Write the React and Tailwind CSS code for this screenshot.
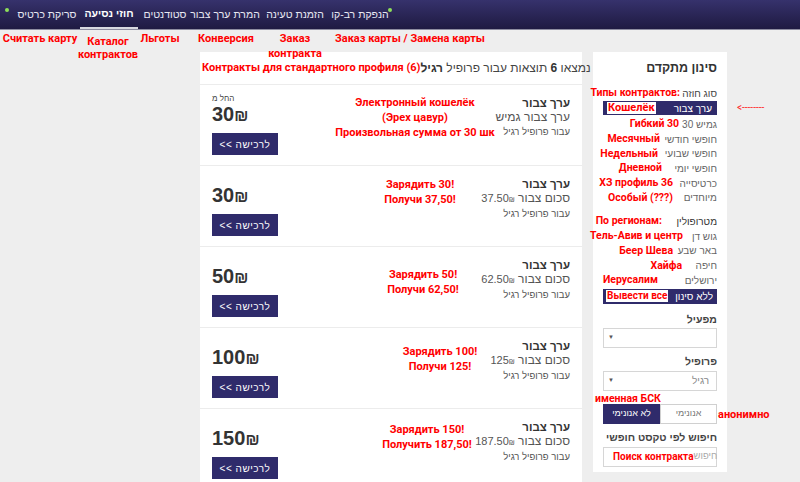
import React from 'react'

const red = "font-['Roboto',sans-serif] font-bold text-[#ff0000] whitespace-nowrap"

const navItems = [
  { label: 'סריקת כרטיס', w: 'w-[66px]' },
  { label: 'חוזי נסיעה', w: 'w-[58px]', active: true },
  { label: 'סטודנטים', w: 'w-[54px]' },
  { label: 'המרת ערך צבור', w: 'w-[66px]' },
  { label: 'הזמנת טעינה', w: 'w-[74px]' },
  { label: 'הנפקת רב-קו', w: 'w-[56px]' },
]

const items = [
  {
    price: '30',
    from: true,
    sub: 'ערך צבור גמיש',
    note: ['Электронный кошелёк', '(Эрех цавур)', 'Произвольная сумма от 30 шк'],
    noteCls: 'ml-[35px] mt-[11px]',
  },
  { price: '30', amount: '37.50', note: ['Зарядить 30!', 'Получи 37,50!'], noteCls: 'ml-[40px] mt-[12px]' },
  { price: '50', amount: '62.50', note: ['Зарядить 50!', 'Получи 62,50!'], noteCls: 'ml-[43px] mt-[21px]' },
  { price: '100', amount: '125', note: ['Зарядить 100!', 'Получи 125!'], noteCls: 'ml-[60px] mt-[17px]' },
  { price: '150', amount: '187.50', note: ['Зарядить 150!', 'Получить 187,50!'], noteCls: 'ml-[47px] mt-[14px]' },
]

const types = [
  { he: 'גמיש 30', ru: 'Гибкий 30', w: 'w-[76px]' },
  { he: 'חופשי חודשי', ru: 'Месячный', w: 'w-[57px]' },
  { he: 'חופשי שבועי', ru: 'Недельный', w: 'w-[55px]' },
  { he: 'חופשי יומי', ru: 'Дневной', w: 'w-[59px]' },
  { he: 'כרטיסייה', ru: 'ХЗ профиль 36', w: 'w-[70px]' },
  { he: 'מיוחדים', ru: 'Особый (???)', w: 'w-[70px]' },
]

const regions = [
  { he: 'גוש דן', ru: 'Тель-Авив и центр', w: 'w-[80px]' },
  { he: 'באר שבע', ru: 'Беер Шева', w: 'w-[70px]' },
  { he: 'חיפה', ru: 'Хайфа', w: 'w-[79px]' },
  { he: 'ירושלים', ru: 'Иерусалим', w: 'w-[55px]' },
]

function Row({ he, ru, w, dark }) {
  return (
    <div className="flex items-center h-[14.7px]">
      <div className={`${w} shrink-0 flex justify-end text-[10.5px] leading-[14px] ${red}`}>{ru}</div>
      <div
        dir="rtl"
        className={`flex-1 min-w-0 whitespace-nowrap text-[10px] ${dark ? 'text-[#333]' : 'text-[#666]'}`}
      >
        {he}
      </div>
    </div>
  )
}

function Item({ it }) {
  return (
    <div className="grid grid-cols-[90px_minmax(0,1fr)_100px] h-[81px] border-b border-[#ececec]">
      <div className="pl-3 pt-[9px]">
        <div dir="rtl" className="h-[10px] text-[8px] leading-[10px] text-[#444] text-left">
          {it.from ? 'החל מ' : ''}
        </div>
        <div className="h-[20px] leading-[20px] text-[20px] font-bold text-[#333] flex items-baseline">
          {it.price}
          <span className="text-[16px]">₪</span>
        </div>
        <button
          dir="rtl"
          className="mt-[9px] w-[66px] h-[22px] bg-[#2f2b6b] text-white text-[10px] tracking-[0.5px]"
        >
          לרכישה &gt;&gt;
        </button>
      </div>
      <div className={`${it.noteCls} w-[180px] text-center text-[11px] leading-[14.8px] ${red}`}>
        {it.note.map((n) => (
          <div key={n}>{n}</div>
        ))}
      </div>
      <div dir="rtl" className="pr-3 pt-[11px] whitespace-nowrap text-right">
        <div className="text-[11.5px] leading-[14px] font-bold text-[#333]">ערך צבור</div>
        <div className="text-[12px] leading-[15px] text-[#555]">
          {it.sub ? (
            it.sub
          ) : (
            <>
              סכום צבור{' '}
              <span dir="ltr" className="text-[11px]">
                {it.amount}
                <span className="text-[7px]">₪</span>
              </span>
            </>
          )}
        </div>
        <div className="text-[9.5px] leading-[13px] text-[#555]">עבור פרופיל רגיל</div>
      </div>
    </div>
  )
}

export default function App() {
  return (
    <div className="w-[800px] h-[482px] overflow-hidden bg-[#eeeeee] font-['Liberation_Sans',sans-serif]">
      {/* top nav */}
      <div className="h-[30px] bg-gradient-to-b from-[#36326c] to-[#1f1a42] border-b border-[#8d8ca0] flex items-stretch text-[10.5px] text-[#e8e8f2]">
        <div className="w-[14px] flex justify-center pt-[8px]">
          <div className="w-[4px] h-[4px] rounded-full bg-[#8ee05a]" />
        </div>
        {navItems.map((n) => (
          <div
            key={n.label}
            dir="rtl"
            className={`${n.w} flex items-center justify-center whitespace-nowrap ${
              n.active ? 'font-bold text-white border-b-2 border-[#d8d8e0]' : ''
            }`}
          >
            {n.label}
          </div>
        ))}
        <div className="w-[6px] pt-[8px]">
          <div className="w-[4px] h-[4px] rounded-full bg-[#8ee05a]" />
        </div>
      </div>

      {/* red labels under nav */}
      <div className="relative z-10 h-[22px] flex text-[11px] leading-[15px]">
        <div className={`w-[80px] flex justify-center pt-[1px] ${red}`}>Считать карту</div>
        <div className={`w-[56px] flex flex-col items-center pt-[5px] leading-[13px] ${red}`}>
          <span>Каталог</span>
          <span>контрактов</span>
        </div>
        <div className={`w-[48px] flex justify-center pt-[1px] ${red}`}>Льготы</div>
        <div className={`w-[84px] flex justify-center pt-[1px] ${red}`}>Конверсия</div>
        <div className={`w-[54px] flex flex-col items-center pt-[1px] ${red}`}>
          <span>Заказ</span>
          <span>контракта</span>
        </div>
        <div className={`pl-[13px] pt-[1px] ${red}`}>Заказ карты / Замена карты</div>
      </div>

      <div className="flex items-start pl-[200px] gap-[11px]">
        {/* results */}
        <div className="w-[382px] bg-white">
          <div className="h-[33px] border-b border-[#ececec] flex items-center pl-[2px] pr-3 text-[12px]">
            <span className={`text-[11px] ${red}`}>Контракты для стандартного профиля (6)</span>
            <span dir="rtl" className="ml-auto whitespace-nowrap text-[#444]">
              נמצאו <b className="text-[#333]">6</b> תוצאות עבור פרופיל <b className="text-[#333]">רגיל</b>
            </span>
          </div>
          {items.map((it, i) => (
            <Item key={i} it={it} />
          ))}
        </div>

        {/* filters */}
        <div className="w-[134px] h-[420px] bg-white px-[10px] pt-[8px] flex flex-col">
          <div dir="rtl" className="text-[12.5px] leading-[16px] font-bold text-[#333] whitespace-nowrap">
            סינון מתקדם
          </div>
          <div className="mt-[10px] flex items-center h-[14px]">
            <div className={`w-[77px] shrink-0 flex justify-end text-[10.5px] ${red}`}>Типы контрактов:</div>
            <div dir="rtl" className="flex-1 min-w-0 text-[10px] text-[#444] whitespace-nowrap">
              סוג חוזה
            </div>
          </div>
          <div className="relative mt-[1px] h-[14px] bg-[#2f2b6b] flex items-center pl-[4px] pr-[5px]">
            <span className={`bg-white px-[1px] text-[11px] leading-[12px] ${red}`}>Кошелёк</span>
            <span dir="rtl" className="ml-auto text-[10px] text-white whitespace-nowrap">
              ערך צבור
            </span>
            <span className="absolute left-[134px] top-[-1px] text-[10px] text-[#ff2a2a] font-['Roboto',sans-serif] whitespace-nowrap">
              &lt;--------
            </span>
          </div>
          <div className="mt-[2px]">
            {types.map((t) => (
              <Row key={t.he} {...t} />
            ))}
          </div>
          <div className="mt-[9px]">
            <Row he="מטרופולין" ru="По регионам:" w="w-[59px]" dark />
            {regions.map((t) => (
              <Row key={t.he} {...t} />
            ))}
          </div>
          <div className="mt-[1px] h-[15px] bg-[#2f2b6b] flex items-center pl-[3px] pr-[4px]">
            <span className={`bg-white px-[1px] text-[10px] leading-[12px] ${red}`}>Вывести все</span>
            <span dir="rtl" className="ml-auto text-[10px] text-white whitespace-nowrap">
              ללא סינון
            </span>
          </div>

          <div dir="rtl" className="mt-[9px] text-[10.5px] leading-[12px] font-bold text-[#444]">
            מפעיל
          </div>
          <div className="mt-[3px] h-[20px] border border-[#d6d6d6] flex items-center px-[4px]">
            <span className="text-[6px] text-[#555]">▼</span>
          </div>
          <div dir="rtl" className="mt-[7px] text-[10.5px] leading-[12px] font-bold text-[#444]">
            פרופיל
          </div>
          <div className="mt-[4px] h-[20px] border border-[#d6d6d6] flex items-center px-[4px]">
            <span className="text-[6px] text-[#555]">▼</span>
            <span dir="rtl" className="ml-auto pr-[3px] text-[10px] text-[#888]">
              רגיל
            </span>
          </div>
          <div className={`relative mt-[3px] h-[10px] -ml-[8px] text-[10.5px] leading-[10px] ${red}`}>
            именная БСК
          </div>
          <div className="relative h-[20px] flex text-[9px]">
            <div dir="rtl" className="w-[57px] bg-[#2f2b6b] text-white flex items-center justify-center">
              לא אנונימי
            </div>
            <div
              dir="rtl"
              className="flex-1 border border-[#d0d0d0] text-[#777] flex items-center justify-center"
            >
              אנונימי
            </div>
            <span className={`absolute left-[115px] top-[3px] text-[11px] ${red}`}>анонимно</span>
          </div>
          <div dir="rtl" className="mt-[7px] text-[10.5px] leading-[12px] font-bold text-[#444] whitespace-nowrap">
            חיפוש לפי טקסט חופשי
          </div>
          <div className="mt-[4px] h-[20px] border border-[#d6d6d6] flex items-center pl-[9px] pr-[6px]">
            <span className={`text-[10px] ${red}`}>Поиск контракта</span>
            <span dir="rtl" className="ml-auto text-[9.5px] text-[#aaa]">
              חיפוש
            </span>
          </div>
        </div>
      </div>
    </div>
  )
}
